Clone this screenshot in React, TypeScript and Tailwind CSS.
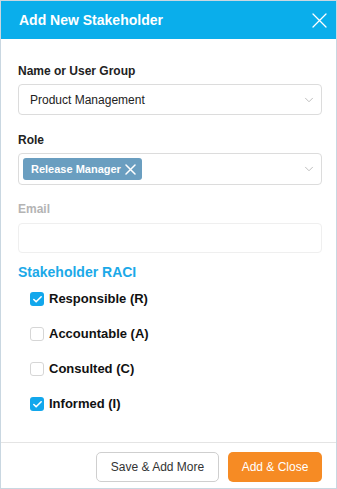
import { ChevronDown, Check } from "lucide-react";

const raci = [
  { label: "Responsible (R)", checked: true },
  { label: "Accountable (A)", checked: false },
  { label: "Consulted (C)", checked: false },
  { label: "Informed (I)", checked: true },
];

function Cross({ size, stroke }: { size: number; stroke: number }) {
  return (
    <svg width={size} height={size} viewBox={`0 0 ${size} ${size}`} fill="none" stroke="currentColor" strokeWidth={stroke} strokeLinecap="round">
      <path d={`M1 1L${size - 1} ${size - 1}M${size - 1} 1L1 ${size - 1}`} />
    </svg>
  );
}

export default function App() {
  return (
    <div
      className="w-[337px] h-[489px] bg-white border border-[#c9d7e1] flex flex-col"
      style={{ fontFamily: "Arial, 'Liberation Sans', sans-serif" }}
    >
      {/* Header */}
      <div className="h-[38px] shrink-0 bg-[#0aaeeb] flex items-center justify-between pl-[18px] pr-[9px]">
        <h2 className="text-white text-[14px] font-bold">Add New Stakeholder</h2>
        <span className="text-white">
          <Cross size={15} stroke={1.3} />
        </span>
      </div>

      {/* Body */}
      <div className="flex-1 pl-[17px] pr-[14px] pt-[26px]">
        <label className="block text-[12px] font-bold text-[#222] leading-none">Name or User Group</label>
        <div className="mt-[7px] h-[31px] border border-[#dcdcdc] rounded-[4px] flex items-center justify-between pl-[11px] pr-[5px]">
          <span className="text-[12px] text-[#222]">Product Management</span>
          <ChevronDown className="w-[14px] h-[14px] text-[#b5b5b5]" strokeWidth={1.5} />
        </div>

        <label className="block mt-[19px] text-[12px] font-bold text-[#222] leading-none">Role</label>
        <div className="mt-[7px] h-[32px] border border-[#dcdcdc] rounded-[4px] flex items-center justify-between pl-[4px] pr-[5px]">
          <span className="h-[22px] bg-[#6a9ec0] rounded-[3px] flex items-center gap-[4px] pl-[8px] pr-[6px] text-white text-[11px] font-bold">
            Release Manager
            <Cross size={11} stroke={1.5} />
          </span>
          <ChevronDown className="w-[14px] h-[14px] text-[#b5b5b5]" strokeWidth={1.5} />
        </div>

        <label className="block mt-[18px] text-[12px] font-bold text-[#b4b4b4] leading-none">Email</label>
        <div className="mt-[8px] h-[30px] border border-[#efefef] rounded-[4px]" />

        <h3 className="mt-[12px] text-[14px] font-bold text-[#1ba9e8] leading-none">Stakeholder RACI</h3>

        <div className="mt-[12px] pl-[12px] flex flex-col gap-[19px]">
          {raci.map((r) => (
            <div key={r.label} className="flex items-center gap-[5px] h-[16px]">
              {r.checked ? (
                <span className="w-[14px] h-[14px] rounded-[3px] bg-[#12a7ec] flex items-center justify-center">
                  <Check className="w-[11px] h-[11px] text-white" strokeWidth={3.5} />
                </span>
              ) : (
                <span className="w-[14px] h-[14px] rounded-[3px] border border-[#d6d6d6] bg-white" />
              )}
              <span className="text-[13px] font-bold text-[#111]">{r.label}</span>
            </div>
          ))}
        </div>
      </div>

      {/* Footer */}
      <div className="h-[46px] shrink-0 border-t border-[#e4e4e4] flex items-start justify-end gap-[9px] pt-[9px] pr-[14px]">
        <button className="w-[123px] h-[30px] border border-[#cfcfcf] rounded-[5px] bg-white text-[12px] text-[#333]">
          Save &amp; Add More
        </button>
        <button className="w-[94px] h-[30px] rounded-[5px] bg-[#f68b24] text-[12px] text-white">
          Add &amp; Close
        </button>
      </div>
    </div>
  );
}
